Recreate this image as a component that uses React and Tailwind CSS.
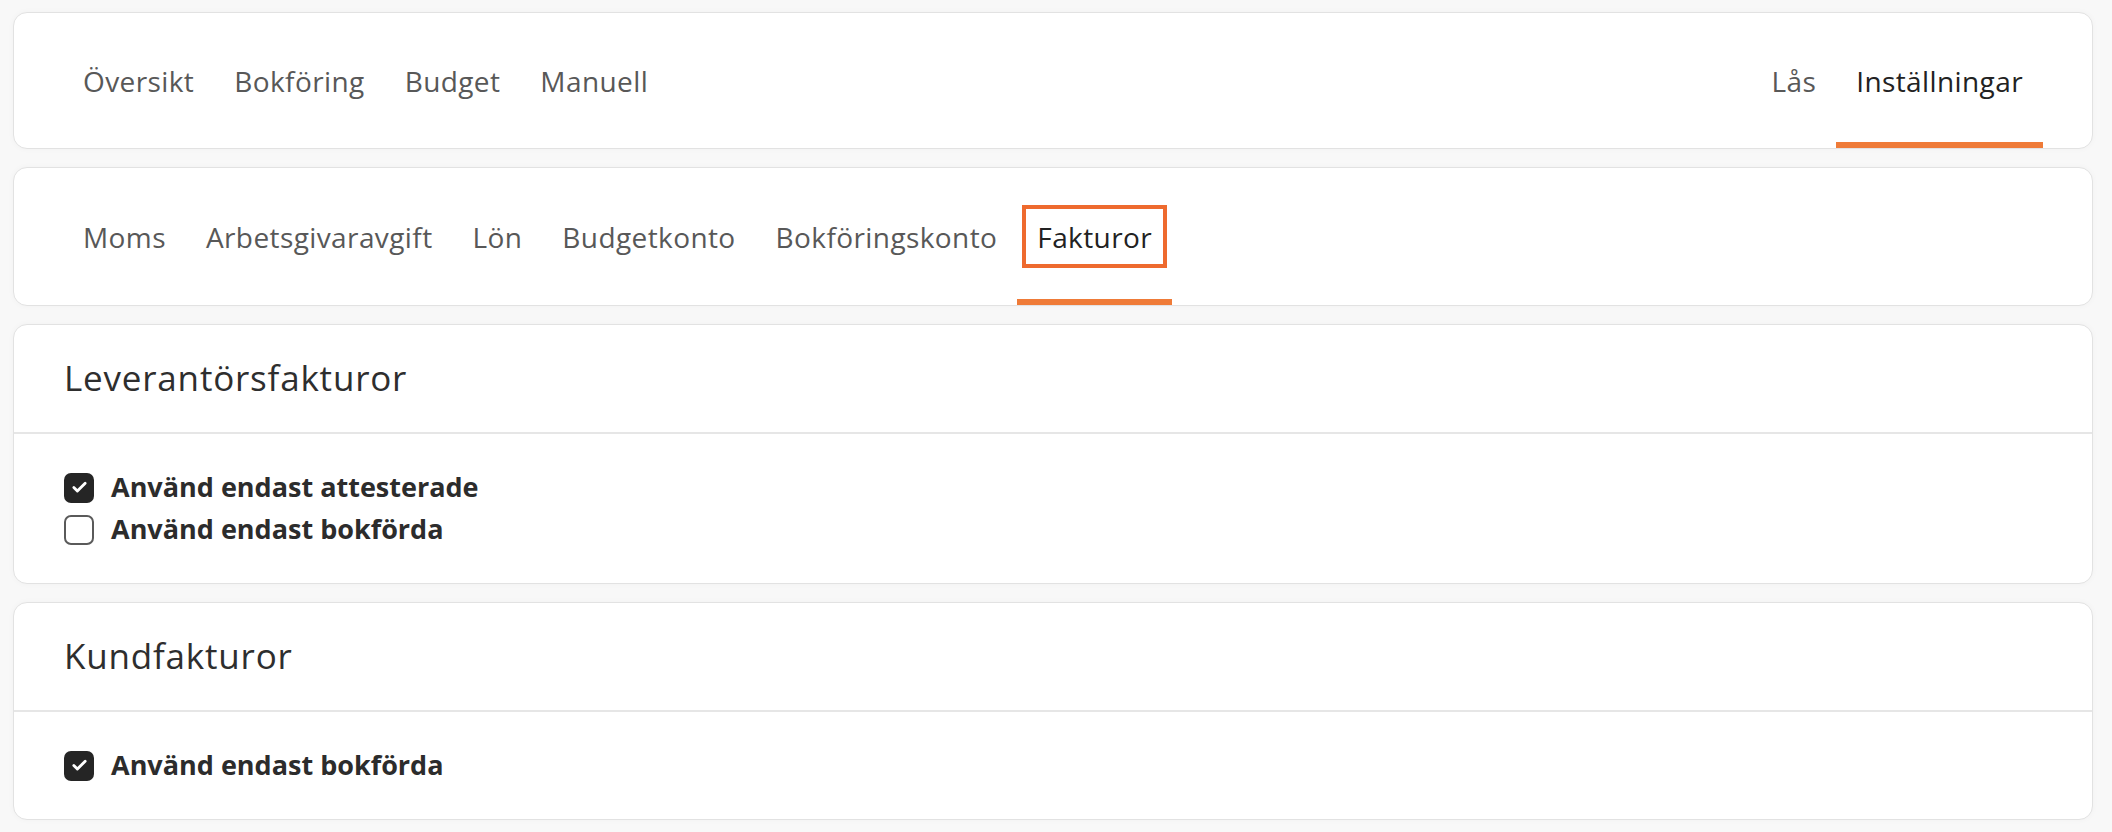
import { Check } from 'lucide-react';

const mainTabs = ['Översikt', 'Bokföring', 'Budget', 'Manuell'];
const rightTabs = ['Lås', 'Inställningar'];
const subTabs = ['Moms', 'Arbetsgivaravgift', 'Lön', 'Budgetkonto', 'Bokföringskonto', 'Fakturor'];

function Tab({ label, active, focused }) {
  return (
    <div className="relative flex h-full items-center px-[20px]">
      {focused ? (
        <span className="-mx-[15px] flex h-[63px] items-center border-[4px] border-[#ee6a2e] px-[11px] text-[#222]">
          {label}
        </span>
      ) : (
        <span className={active ? 'text-[#222]' : 'text-[#585858]'}>{label}</span>
      )}
      {active && <div className="absolute bottom-0 left-0 right-0 h-[6px] bg-[#ef7b38]" />}
    </div>
  );
}

function Box({ checked, label }) {
  return (
    <label className="flex h-[31px] items-center gap-[17px]">
      {checked ? (
        <span className="flex h-[30px] w-[30px] items-center justify-center rounded-[7px] bg-[#252525]">
          <Check size={17} strokeWidth={4} color="#fff" />
        </span>
      ) : (
        <span className="h-[30px] w-[30px] rounded-[7px] border-[2px] border-[#5a5a5a] bg-white" />
      )}
      <span className="text-[27px] font-bold text-[#2c2c2c]">{label}</span>
    </label>
  );
}

function Section({ title, items }) {
  return (
    <div className="rounded-[14px] border border-[#e2e2e2] bg-white shadow-[0_0_6px_rgba(0,0,0,0.03)]">
      <div className="flex h-[109px] items-center border-b-2 border-[#e6e6e6] px-[50px]">
        <h2 className="text-[35px] font-medium tracking-[0.8px] text-[#2e2e2e]">{title}</h2>
      </div>
      <div className="flex flex-col gap-[11px] px-[50px] py-[38px]">
        {items.map((it) => (
          <Box key={it.label} {...it} />
        ))}
      </div>
    </div>
  );
}

export default function App() {
  return (
    <div
      className="min-h-screen bg-[#f8f8f8] pb-[12px] pl-[13px] pr-[19px] pt-[12px]"
      style={{ fontFamily: '"Open Sans", "Noto Sans", sans-serif' }}
    >
      <div className="flex flex-col gap-[18px]">
        <nav className="flex h-[137px] items-stretch justify-between rounded-[14px] border border-[#e2e2e2] bg-white px-[49px] text-[28px] tracking-[0.4px] shadow-[0_0_6px_rgba(0,0,0,0.03)]">
          <div className="flex items-stretch">
            {mainTabs.map((t) => (
              <Tab key={t} label={t} />
            ))}
          </div>
          <div className="flex items-stretch">
            {rightTabs.map((t) => (
              <Tab key={t} label={t} active={t === 'Inställningar'} />
            ))}
          </div>
        </nav>

        <nav className="flex h-[139px] items-stretch rounded-[14px] border border-[#e2e2e2] bg-white px-[49px] text-[28px] tracking-[0.4px] shadow-[0_0_6px_rgba(0,0,0,0.03)]">
          {subTabs.map((t) => (
            <Tab key={t} label={t} active={t === 'Fakturor'} focused={t === 'Fakturor'} />
          ))}
        </nav>

        <Section
          title="Leverantörsfakturor"
          items={[
            { label: 'Använd endast attesterade', checked: true },
            { label: 'Använd endast bokförda', checked: false },
          ]}
        />

        <Section title="Kundfakturor" items={[{ label: 'Använd endast bokförda', checked: true }]} />
      </div>
    </div>
  );
}
